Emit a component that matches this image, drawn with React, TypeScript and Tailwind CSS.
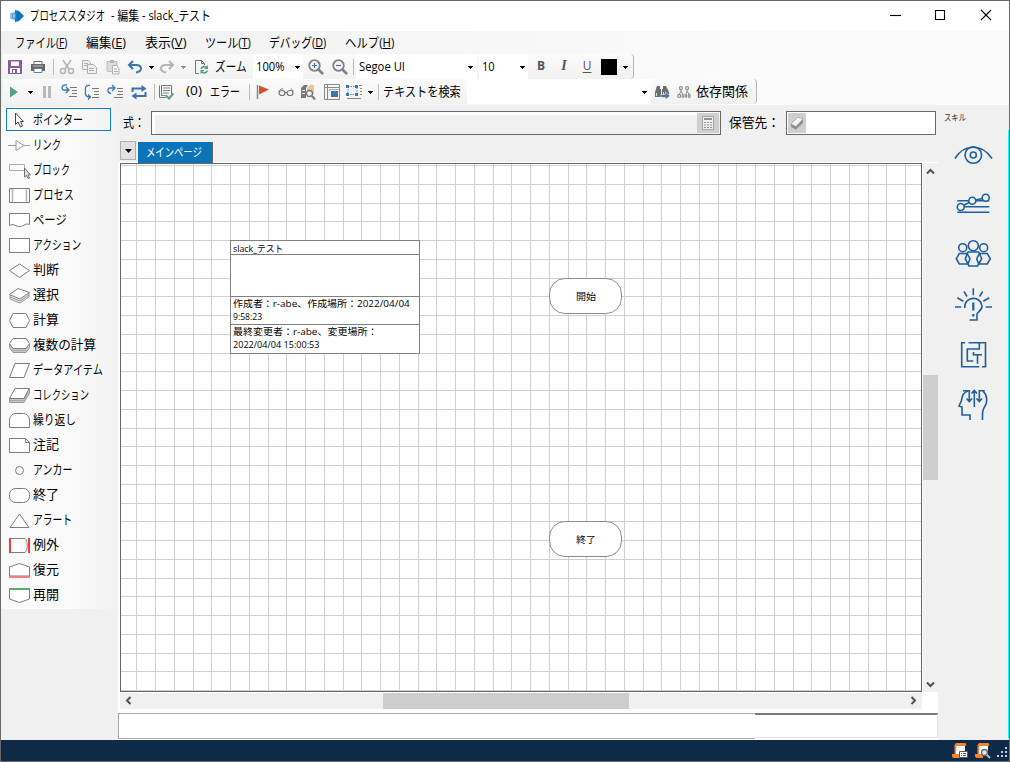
import React from 'react'
import clsx from 'clsx'

// Squeezes its text horizontally so that it takes exactly `w` pixels
function Fit({ w, className, children }: { w: number; className?: string; children: React.ReactNode }) {
  const ref = React.useRef<HTMLSpanElement>(null)
  const [scale, setScale] = React.useState(1)

  React.useLayoutEffect(() => {
    if (ref.current) setScale(w / ref.current.offsetWidth)
  }, [w])

  return (
    <span className={clsx('block shrink-0', className)} style={{ width: w }}>
      <span ref={ref} className="inline-block origin-left whitespace-nowrap" style={{ transform: `scaleX(${scale})` }}>
        {children}
      </span>
    </span>
  )
}

function Cell({ className, children }: { className: string; children?: React.ReactNode }) {
  return <div className={clsx('flex h-full shrink-0 items-center justify-center', className)}>{children}</div>
}

function Caret({ className = 'text-black' }: { className?: string }) {
  return (
    <svg width="5" height="3" viewBox="0 0 5 3" className={clsx('mt-px shrink-0', className)} shapeRendering="crispEdges">
      <path d="M0 0h5v1h-1v1h-1v1h-1v-1h-1v-1h-1z" fill="currentColor" />
    </svg>
  )
}

function Separator({ className }: { className: string }) {
  return (
    <Cell className={className}>
      <div className="h-4 w-px bg-[#bdbdbd]" />
    </Cell>
  )
}

function Icon({ children, size = 16 }: { children: React.ReactNode; size?: number }) {
  return (
    <svg width={size} height={size} viewBox="0 0 16 16" fill="none" className="shrink-0">
      {children}
    </svg>
  )
}

function TitleBar() {
  return (
    <div className="flex h-[30px] items-center bg-white pb-[2px]">
      <svg width="14" height="14" viewBox="0 0 14 14" className="mt-px ml-[9px]">
        <path d="M0 4l7-2v10l-7-2z" fill="#9ccbe8" />
        <path d="M5 1l4 1 5 5-5 5-4 1z" fill="#0b76bd" />
        <path d="M2.5 5h3v4h-3z" fill="none" stroke="#3d93cb" />
      </svg>
      <Fit w={75} className="ml-[6px]">プロセススタジオ</Fit>
      <Fit w={100} className="ml-[6px]">- 編集 - slack_テスト</Fit>
      <div className="ml-auto flex h-full items-center">
        <svg width="112" height="14" viewBox="0 0 112 14" className="mr-[12px]" fill="none" stroke="#000" strokeWidth="1.1">
          <path d="M5 7.5h11" />
          <path d="M50.5 2.5h9v9h-9z" />
          <path d="M96 2l10 10M106 2l-10 10" />
        </svg>
      </div>
    </div>
  )
}

const menus = [
  { label: 'ファイル', key: 'F', w: 52, cell: 'w-[71px]' },
  { label: '編集', key: 'E', w: 40, cell: 'w-[59px]' },
  { label: '表示', key: 'V', w: 41, cell: 'w-[60px]' },
  { label: 'ツール', key: 'T', w: 46, cell: 'w-[64px]' },
  { label: 'デバッグ', key: 'D', w: 57, cell: 'w-[76px]' },
  { label: 'ヘルプ', key: 'H', w: 49, cell: 'w-[68px]' },
]

function MenuBar() {
  return (
    <div className="flex h-[23px] items-center pb-px pl-[14px]">
      {menus.map((m) => (
        <div key={m.key} className={clsx('shrink-0', m.cell)}>
          <Fit w={m.w}>
            {m.label}(<span className="underline underline-offset-1">{m.key}</span>)
          </Fit>
        </div>
      ))}
    </div>
  )
}

function MainToolbar() {
  return (
    <div className="flex h-[25px] w-[631px] items-center rounded-r border-r border-[#b5b5b5] bg-linear-to-b from-[#fbfbfb] to-[#f1f1f1]">
      <Cell className="w-6">
        <Icon>
          <path d="M1 1h14v14H1z" fill="#8a5aa9" />
          <path d="M4 2.5h8V7H4zM3 9h10v5H3z" fill="#fff" />
          <path d="M5 10h5v4H5z" fill="#8a5aa9" />
          <path d="M6 11h2v3H6z" fill="#fff" />
        </Icon>
      </Cell>
      <Cell className="w-[22px]">
        <Icon>
          <path d="M4 2.5h8v4H4z" fill="#fff" stroke="#666" />
          <path d="M1 5h14v7H1z" fill="#666" />
          <path d="M3 7h10" stroke="#bbb" />
          <path d="M4 9.5h8v4H4z" fill="#fff" stroke="#5a7fa8" />
        </Icon>
      </Cell>
      <Separator className="w-2" />
      <Cell className="w-5">
        <Icon>
          <path d="M4 1l6 9M12 1L6 10" stroke="#b4b4b4" strokeWidth="1.6" />
          <circle cx="4" cy="12" r="2.5" stroke="#b4b4b4" strokeWidth="1.5" />
          <circle cx="12" cy="12" r="2.5" stroke="#b4b4b4" strokeWidth="1.5" />
        </Icon>
      </Cell>
      <Cell className="w-6">
        <Icon>
          <path d="M1.5 1.5h6l2 2v7h-8z" fill="#eee" stroke="#b0b0b0" />
          <path d="M3 4.5h4M3 6.5h4" stroke="#b0b0b0" />
          <path d="M6.5 5.5h6l3 3v6h-9z" fill="#eee" stroke="#b0b0b0" />
          <path d="M8 9.5h5M8 11.5h5" stroke="#b0b0b0" />
        </Icon>
      </Cell>
      <Cell className="w-6">
        <Icon>
          <path d="M2 2.5h10v10H2z" fill="#ddd" stroke="#c0c0c0" />
          <path d="M5 1h4v3H5z" fill="#b8b8b8" />
          <path d="M7.5 6.5h4L14 9v6H7.5z" fill="#f4f4f4" stroke="#b0b0b0" />
          <path d="M9 10h3M9 12.5h4" stroke="#b0b0b0" />
        </Icon>
      </Cell>
      <Cell className="w-5">
        <Icon>
          <path d="M6 2L2 6l4 4M2 6h7c3 0 5 1.5 5 3.500S12.500 13 9 13.500" stroke="#3f74ad" strokeWidth="2" />
        </Icon>
      </Cell>
      <Cell className="w-3"><Caret /></Cell>
      <Cell className="w-5">
        <Icon>
          <path d="M10 2l4 4-4 4M14 6H7C4 6 2 7.500 2 9.500S3.500 13 7 13.500" stroke="#b4b4b4" strokeWidth="2" />
        </Icon>
      </Cell>
      <Cell className="w-3"><Caret className="text-[#8e8e8e]" /></Cell>
      <Cell className="w-6">
        <Icon>
          <path d="M6 14.500H2.500v-13h6l3 3V6" stroke="#777" />
          <path d="M8.500 1.500v3h3" stroke="#777" />
          <path d="M8 10c1-3 5-3 6-1M14.500 11.500c-1 3-5 3-6 1" stroke="#5f9f86" strokeWidth="1.600" />
          <path d="M15 6v4h-4zM7.500 15v-4h4z" fill="#5f9f86" />
        </Icon>
      </Cell>
      <Cell className="w-10 justify-start! pb-px pl-[2px]"><Fit w={32}>ズーム</Fit></Cell>
      <Cell className="w-[50px] justify-between! bg-white pr-[3px] pl-[3px]">
        <Fit w={29} className="text-[12px]">100%</Fit>
        <Caret />
      </Cell>
      <Cell className="w-[26px]">
        <Icon>
          <circle cx="6.500" cy="6.500" r="5.300" stroke="#808080" strokeWidth="1.800" />
          <path d="M10.500 10.500l4.500 4.500" stroke="#808080" strokeWidth="2.600" />
          <path d="M4 6.500h5M6.500 4v5" stroke="#3f74ad" strokeWidth="1.200" />
        </Icon>
      </Cell>
      <Cell className="w-[22px]">
        <Icon>
          <circle cx="6.500" cy="6.500" r="5.300" stroke="#808080" strokeWidth="1.800" />
          <path d="M10.500 10.500l4.500 4.500" stroke="#808080" strokeWidth="2.600" />
          <path d="M4 6.500h5" stroke="#3f74ad" strokeWidth="1.200" />
        </Icon>
      </Cell>
      <Separator className="w-[5px]" />
      <Cell className="w-[121px] justify-between! bg-white pr-[4px] pl-[3px]">
        <Fit w={46} className="text-[12px]">Segoe UI</Fit>
        <Caret />
      </Cell>
      <Cell className="ml-[2px] w-[49px] justify-between! bg-white pr-[3px] pl-[3px]">
        <Fit w={13} className="text-[12px]">10</Fit>
        <Caret />
      </Cell>
      <Cell className="w-[26px] pb-[2px] text-[12px] font-bold text-[#555]">B</Cell>
      <Cell className="w-5 pb-[2px] font-['Liberation_Serif',serif] text-[14px] font-bold text-[#555] italic">I</Cell>
      <Cell className="w-[26px] pb-[2px] text-[12px] text-[#555]">
        <span className="underline underline-offset-2">U</span>
      </Cell>
      <Cell className="w-[18px]"><div className="h-4 w-4 bg-black" /></Cell>
      <Cell className="w-[14px]"><Caret /></Cell>
    </div>
  )
}

function DebugToolbar() {
  return (
    <div className="flex h-[25px] w-[754px] items-center rounded-r border-r border-[#b5b5b5] bg-linear-to-b from-[#fbfbfb] to-[#f1f1f1]">
      <Cell className="w-[22px]">
        <Icon><path d="M4 2.500l8 5.500-8 5.500z" fill="#55a07f" /></Icon>
      </Cell>
      <Cell className="w-[10px]"><Caret /></Cell>
      <Cell className="w-6">
        <Icon><path d="M4 2h3v12H4zM9 2h3v12H9z" fill="#b9b9b9" /></Icon>
      </Cell>
      <Cell className="w-5">
        <Icon>
          <path d="M6 1C0 0 0 6 3 6h4M5 3l3 3-3 3" stroke="#3f74ad" strokeWidth="1.300" />
          <path d="M9 3.500h7M11 6.500h5M11 9.500h5M8 12.500h8" stroke="#777" />
        </Icon>
      </Cell>
      <Cell className="w-[26px]">
        <Icon>
          <path d="M6 1.500C2 1 1 3 1.500 6c-.5 5 0 7 4.500 7M4 10.500L6.500 13 4 15.500" stroke="#3f74ad" strokeWidth="1.300" />
          <path d="M8 4.500h7M10 7.500h5M10 10.500h5M8 13.500h7" stroke="#777" />
        </Icon>
      </Cell>
      <Cell className="w-5">
        <Icon>
          <path d="M4 9.500C0 9 0 4 3 4h4M5 1l3 3-3 3" stroke="#3f74ad" strokeWidth="1.300" />
          <path d="M10 4.500h6M11 7.500h5M10 10.500h6M7 13.500h9" stroke="#777" />
        </Icon>
      </Cell>
      <Cell className="w-7">
        <Icon>
          <path d="M1.500 8V4.500H12M14.500 8v4H4" stroke="#3f74ad" strokeWidth="2" />
          <path d="M10.500 1l5 3.500-5 3.500zM5.500 8.500l-5 3.500 5 3.500z" fill="#3f74ad" />
        </Icon>
      </Cell>
      <Separator className="w-[3px]" />
      <Cell className="w-5">
        <Icon>
          <path d="M3.500 1.500h10v9M1.500 1.500v12H8M3.500 1.500v10" stroke="#777" />
          <path d="M5 4h7M5 6.500h7M5 9h6M3 11.500h5" stroke="#888" />
          <path d="M8 11.500l3 3 4.500-5" stroke="#5f9f86" strokeWidth="2" />
        </Icon>
      </Cell>
      <Cell className="w-[72px] justify-start! pb-px pl-[10px]">
        <Fit w={16} className="text-[12px]">(0)</Fit>
        <Fit w={30} className="ml-[8px]">エラー</Fit>
      </Cell>
      <Separator className="w-[3px]" />
      <Cell className="w-6">
        <Icon>
          <path d="M2.500 1v14" stroke="#888" strokeWidth="1.500" />
          <path d="M4 1.500l10 4-10 5z" fill="#d9512c" />
        </Icon>
      </Cell>
      <Cell className="w-[22px]">
        <Icon>
          <ellipse cx="4" cy="9" rx="3" ry="2.500" stroke="#777" strokeWidth="1.200" />
          <ellipse cx="12" cy="9" rx="3" ry="2.500" stroke="#777" strokeWidth="1.200" />
          <path d="M7 8.500h2M1 8c0-2 2-3.500 4-3M15 8c0-2-1-3-2.500-3" stroke="#777" />
        </Icon>
      </Cell>
      <Cell className="w-[22px]">
        <Icon>
          <path d="M1 4l3-3h4L6 4v10H1z" fill="#777" />
          <path d="M8 3l2-2h4v9H7V4z" fill="#efc48d" />
          <path d="M2 6.500h3M2 9.500h3" stroke="#eee" />
          <circle cx="9.500" cy="9.500" r="3" fill="#f4f1ea" stroke="#777" strokeWidth="1.300" />
          <path d="M12 12l3 3.500" stroke="#777" strokeWidth="2" />
        </Icon>
      </Cell>
      <Cell className="w-[26px]">
        <Icon>
          <path d="M.5.5h15v15H.5zM.5 3.500h15M3.500.5v15" stroke="#888" />
          <path d="M5.500 7v-1.500h9" stroke="#aaa" />
          <path d="M7 7h7v6H7z" fill="#3f74ad" />
        </Icon>
      </Cell>
      <Cell className="w-[18px]">
        <Icon>
          <path d="M2 2.500h9v8H2z" stroke="#5c87b5" strokeDasharray="1.500 1" />
          <path d="M0 1h3v3H0zM9 1h3v3H9zM0 9h3v3H0zM9 9h3v3H9z" fill="#3f74ad" />
          <path d="M13 1.500h3M14 4.500h2M14 7.500h2M14 10.500h2M1 14.500h14" stroke="#888" />
        </Icon>
      </Cell>
      <Cell className="w-[14px]"><Caret /></Cell>
      <Separator className="w-[3px]" />
      <Cell className="w-[87px] justify-start! pb-px pl-[3px]"><Fit w={78}>テキストを検索</Fit></Cell>
      <Cell className="w-[184px] justify-end! bg-white pr-[4px]"><Caret /></Cell>
      <Cell className="w-[22px]">
        <Icon>
          <path d="M3 2h3v3h1v8H1V8zM9 2h3l3 6v5H8V5h1z" fill="#6c6c6c" />
          <path d="M2.500 9v3M9.500 8v4" stroke="#ddd" />
          <path d="M7 10.500h4.500V8l4.500 4-4.500 3.500v-2H7z" fill="#3f74ad" stroke="#f4f4f4" strokeWidth=".6" />
        </Icon>
      </Cell>
      <Cell className="w-[22px]">
        <Icon size={14}>
          <path d="M3 2h3v3H3zM10 2h3v3h-3zM1 11h3v3H1zM6 11h2v3H6zM10 11h1v3h-1zM13 11h2v3h-2zM4.500 5v2L2.500 11M4.500 7L7 11M11.500 5v2L10 11M11.500 7l2.500 4" stroke="#808080" strokeWidth="1.100" />
        </Icon>
      </Cell>
      <Cell className="w-[60px] justify-start! pb-px pl-[1px]"><Fit w={52}>依存関係</Fit></Cell>
    </div>
  )
}

// Stencil icons are drawn on a 22x18 box
const stages: { label: string; w: number; icon: React.ReactNode }[] = [
  {
    label: 'ポインター',
    w: 50,
    icon: <path d="M7.500 2v11.500l2.500-2.500 2.500 5 2-1-2-4.500h3z" fill="#fff" stroke="#444" />,
  },
  { label: 'リンク', w: 28, icon: <path d="M0 9.500h8M16 9.500h6M8 4.500v10l8-5z" fill="none" stroke="#999" /> },
  {
    label: 'ブロック',
    w: 37,
    icon: (
      <>
        <path d="M1.500 3.500h15v6h-15z" fill="none" stroke="#aaa" />
        <path d="M16.500 7v9l2-1.500 1.500 3 1.500-.5-1.500-3h2.500z" fill="#ddd" stroke="#555" strokeWidth=".8" />
      </>
    ),
  },
  {
    label: 'プロセス',
    w: 41,
    icon: (
      <>
        <path d="M1.500 2.500h20v14h-20z" />
        <path d="M4.500 3v13M18.500 3v13" stroke="#b5b5b5" strokeWidth="1.500" />
      </>
    ),
  },
  { label: 'ページ', w: 34, icon: <path d="M1.500 2.500h20v11c-5-2-6 3-11 2-4-1-5-3-9-1z" /> },
  { label: 'アクション', w: 48, icon: <path d="M1.500 2.500h20v14h-20z" /> },
  { label: '判断', w: 26, icon: <path d="M1.500 9.500L11.500 3l10 6.500-10 7z" /> },
  {
    label: '選択',
    w: 26,
    icon: (
      <>
        <path d="M2 9v4l10 4 9-6V7z" fill="#e8e8e8" stroke="#999" />
        <path d="M2 11l10 4 9-6" fill="none" stroke="#999" />
        <path d="M1.500 8.500l8.500-6 11.500 4L12 13z" />
      </>
    ),
  },
  { label: '計算', w: 26, icon: <path d="M5 2.500h13l3.500 7-3.500 7H5l-3.500-7z" /> },
  {
    label: '複数の計算',
    w: 63,
    icon: (
      <>
        <path d="M1.500 8v3.500l3.500 5h13l3.500-5V8" fill="#c8c8c8" stroke="#999" />
        <path d="M4.500 14.500h14" stroke="#aaa" />
        <path d="M5 2.500h13l3.500 5-3.500 5H5l-3.500-5z" />
      </>
    ),
  },
  { label: 'データアイテム', w: 70, icon: <path d="M7 2.500h14.500l-5.500 14H1.500z" /> },
  {
    label: 'コレクション',
    w: 56,
    icon: (
      <>
        <path d="M1.500 12.500v4H16l5.500-9v-5" fill="#c8c8c8" stroke="#999" />
        <path d="M2 14.500h13.500l5.500-9" fill="none" stroke="#aaa" />
        <path d="M7 2.500h14l-5 10H1.500z" />
      </>
    ),
  },
  { label: '繰り返し', w: 43, icon: <path d="M1.500 16.500V8c1-3 3-5.500 6-5.500h8c3 0 5 2.500 6 5.500v8.500z" /> },
  { label: '注記', w: 26, icon: <path d="M1.500 2.500h16l4 4v10h-20zM17.500 2.500v4h4" /> },
  { label: 'アンカー', w: 39, icon: <circle cx="11.500" cy="9.500" r="4" /> },
  { label: '終了', w: 26, icon: <rect x="1.500" y="2.500" width="20" height="14" rx="6" /> },
  { label: 'アラート', w: 39, icon: <path d="M11.500 3L21 16.500H2z" /> },
  {
    label: '例外',
    w: 26,
    icon: (
      <>
        <path d="M2 2.500h15c3 3 3 11 0 14H2z" />
        <path d="M2 2v15M21 2v15" stroke="#f03c3c" strokeWidth="2" />
      </>
    ),
  },
  {
    label: '復元',
    w: 26,
    icon: (
      <>
        <path d="M1.500 15V6l10-3.500 10 3.500v9z" />
        <path d="M1 16h21" stroke="#f08080" strokeWidth="2" />
      </>
    ),
  },
  {
    label: '再開',
    w: 26,
    icon: (
      <>
        <path d="M1.500 3v10l10 3.500 10-3.500V3z" />
        <path d="M1 3h21" stroke="#62a868" strokeWidth="2" />
      </>
    ),
  },
]

function Toolbox() {
  return (
    <div className="w-[117px] shrink-0 bg-[#f0f0f0] pt-[2px]">
      <div className="h-[502px] rounded-b bg-linear-to-r from-[#fafafa] from-60% to-[#f1f1f1] pl-[5px]">
        {stages.map((s, i) => (
          <div key={s.label} className="flex h-[25px] items-center">
            <div
              className={clsx(
                'flex h-[23px] w-[105px] items-center border',
                i === 0 ? 'border-[#0f7bd4]' : 'border-transparent',
              )}
            >
              <svg width="24" height="19" viewBox="0 -1 24 19" className="ml-px shrink-0" fill="#fff" stroke="#7d7d7d">
                {s.icon}
              </svg>
              <Fit w={s.w} className="mb-[2px] ml-px">{s.label}</Fit>
            </div>
          </div>
        ))}
      </div>
    </div>
  )
}

function ExpressionBar() {
  return (
    <div className="flex h-9 shrink-0 items-start bg-[#f0f0f0] pt-[6px]">
      <Fit w={22} className="ml-[5px] pt-[2px]">式：</Fit>
      <div className="ml-[6px] flex h-6 w-[570px] items-center justify-end border border-[#696969] bg-[#f0f0f0] shadow-[inset_3px_3px_0_#fff]">
        <div className="mr-px flex h-5 w-[22px] items-center justify-center bg-[#cfcfcf]">
          <Icon>
            <path d="M2.500 1.500h11v13h-11z" fill="#eee" stroke="#a5a5a5" />
            <path d="M4 3h8v2H4zM4 7h2v1H4zM7 7h2v1H7zM10 7h2v1h-2zM4 9.500h2v1H4zM7 9.500h2v1H7zM10 9.500h2v1h-2zM4 12h2v1H4zM7 12h2v1H7zM10 12h2v1h-2z" fill="#909090" />
          </Icon>
        </div>
      </div>
      <Fit w={51} className="ml-[8px] pt-[2px]">保管先：</Fit>
      <div className="ml-[6px] flex h-6 w-[150px] items-center border border-[#696969] bg-white">
        <div className="ml-px flex h-5 w-[18px] items-center justify-center bg-[#cfcfcf]">
          <Icon>
            <path d="M2 9l7-7 5 2v4l-7 6.500-5-2.500z" fill="#8e8e8e" />
            <path d="M2 9l7-7 5 2-7 7.500z" fill="#f3f3f3" stroke="#999" strokeWidth=".6" />
          </Icon>
        </div>
      </div>
    </div>
  )
}

const columns = Array.from({ length: 42 }, (_, i) => Math.round(15.25 + i * 18.75) + 0.5)
const rows = Array.from({ length: 29 }, (_, i) => Math.round(1 + i * 18.75) + 0.5)

function Canvas() {
  return (
    <div className="relative h-[529px] w-[802px] shrink-0 overflow-hidden border border-[#666] bg-white text-[9.5px] leading-[13px]">
      <svg width="800" height="527" stroke="#d0d0d0" className="block">
        {columns.map((x) => (
          <path key={x} d={`M${x} 0v527`} />
        ))}
        {rows.map((y) => (
          <path key={y} d={`M0 ${y}h800`} />
        ))}
      </svg>

      {/* Page information */}
      <div className="absolute top-[76px] left-[109px] w-[190px] border border-[#808080] bg-white">
        <div className="h-[14px] border-b border-[#808080] pt-px pl-[2px]"><Fit w={50}>slack_テスト</Fit></div>
        <div className="h-[42px] border-b border-[#808080]" />
        <div className="h-[28px] border-b border-[#808080] pl-[2px]">
          <Fit w={177}>作成者：r-abe、作成場所：2022/04/04</Fit>
          <Fit w={29}>9:58:23</Fit>
        </div>
        <div className="h-[28px] pl-[2px]">
          <Fit w={144}>最終変更者：r-abe、変更場所：</Fit>
          <Fit w={86}>2022/04/04 15:00:53</Fit>
        </div>
      </div>

      <div className="absolute top-[114px] left-[428px] flex h-9 w-[73px] items-center justify-center rounded-[16px] border border-[#8c8c8c] bg-white">
        <Fit w={20}>開始</Fit>
      </div>
      <div className="absolute top-[357px] left-[428px] flex h-9 w-[73px] items-center justify-center rounded-[16px] border border-[#8c8c8c] bg-white">
        <Fit w={20}>終了</Fit>
      </div>
    </div>
  )
}

function Chevron({ d }: { d: string }) {
  return (
    <svg width="9" height="9" viewBox="0 0 9 9" fill="none" stroke="#505050" strokeWidth="2" className="shrink-0">
      <path d={d} />
    </svg>
  )
}

function Workspace() {
  return (
    <div className="flex w-[820px] shrink-0 flex-col bg-white">
      <ExpressionBar />
      <div className="flex h-[22px] shrink-0 items-start border-b border-white bg-[#f0f0f0] pl-[2px]">
        <div className="flex h-[19px] w-4 items-center justify-center border border-[#adadad] bg-[#e1e1e1]">
          <svg width="7" height="4" viewBox="0 0 7 4"><path d="M0 0h7L3.500 4z" /></svg>
        </div>
        <div className="mt-px ml-[2px] flex h-[21px] w-[75px] items-center border-r border-[#666] bg-[#0b74b9] pt-px pl-[8px] text-[12px] text-white">
          <Fit w={56}>メインページ</Fit>
        </div>
      </div>
      <div className="flex h-[529px] shrink-0 pl-[2px]">
        <Canvas />
        <div className="ml-px flex w-[15px] flex-col items-center bg-[#f0f0f0]">
          <div className="mt-[4px] h-[208px]"><Chevron d="M1 6.500L4.500 3 8 6.500" /></div>
          <div className="h-[105px] w-full bg-[#cdcdcd]" />
          <div className="mt-auto mb-[3px]"><Chevron d="M1 2.500L4.500 6 8 2.500" /></div>
        </div>
      </div>
      <div className="mt-px ml-[2px] flex h-4 w-[802px] shrink-0 items-center bg-[#f0f0f0]">
        <div className="w-[263px] pb-px pl-[4px]"><Chevron d="M6.500 1L3 4.500 6.500 8" /></div>
        <div className="h-full w-[246px] bg-[#cdcdcd]" />
        <div className="mr-[4px] ml-auto pb-px"><Chevron d="M2.500 1L6 4.500 2.500 8" /></div>
      </div>
      <div className="mt-[4px] flex h-[26px] shrink-0">
        <div className="w-[637px] border border-r-0 border-[#a9a9b1] bg-white" />
        <div className="mb-px w-[183px] border-t-2 border-r border-b border-t-[#7b7b7f] border-r-[#e3e3e3] border-b-[#e3e3e3] bg-white" />
      </div>
    </div>
  )
}

const skills: { name: string; art: React.ReactNode }[] = [
  {
    name: 'vision',
    art: (
      <>
        <path d="M2 23.500c9-15 27-15 37 0" />
        <circle cx="20.300" cy="20" r="8.300" />
        <circle cx="20.300" cy="20" r="3" />
      </>
    ),
  },
  {
    name: 'planning',
    art: (
      <>
        <path d="M4.300 15.700h32M12 21.700h24.300M4.300 27.300h32M7.700 22l11.600-6.300 13.400-3" />
        <g fill="#f0f0f0">
          <circle cx="7.700" cy="22" r="3.500" />
          <circle cx="19.300" cy="15.700" r="3.500" />
          <circle cx="32.700" cy="12.700" r="3.500" />
        </g>
      </>
    ),
  },
  {
    name: 'collaboration',
    art: (
      <>
        <circle cx="20.300" cy="10.700" r="5" />
        <circle cx="9.700" cy="12.700" r="4" />
        <circle cx="30.700" cy="12.700" r="4" />
        <path d="M15 17h10.700l3 6.700-4 7.300H16l-3.700-7.300z" />
        <path d="M14 18.500H6.300l-3 5.200 3 5.300H15l2-5.300zM26.500 18.500h7.800l3 5.200-3 5.300h-8.600l-2-5.300z" />
      </>
    ),
  },
  {
    name: 'problem solving',
    art: (
      <>
        <path d="M20.300 3.300v7M11 6.500l3 5M4.300 12.700l6 3.600M2 22h6.300M29.600 6.500l-3 5M36.300 12.700l-6 3.600M39 22h-6.300" />
        <path d="M11.700 23c-.7-12 16-13 17.300-2 .2 4-4 6-5 8v6h-7.500" />
        <path d="M20.300 17.500v8M20.300 29v2.500" strokeWidth="2.200" />
      </>
    ),
  },
  {
    name: 'knowledge',
    art: (
      <>
        <path d="M12 7.700H8.700v24h17.600M15.500 7.700h17v24h-3.500" />
        <path d="M26.300 8v6h-12v12h6M29 19.700h-8.500V17M24.500 19.700v9" />
      </>
    ),
  },
  {
    name: 'learning',
    art: (
      <>
        <path d="M15 6c-4 1-6 5-6.500 9.500L6 21l3 1v8h8v5" />
        <path d="M30 6c5 5 4.500 12 1.500 16-2 3-2 5-2 13" />
        <path d="M10 5.700h6.300v10.500M21.300 22V6M26.300 16.200V5.700h5.500M13.500 13.500l2.800 3 2.800-3M18.500 8.500l2.800-3 2.800 3M23.500 13.500l2.800 3 2.800-3" />
      </>
    ),
  },
]

function SkillsPanel() {
  return (
    <div className="flex w-[71px] shrink-0 flex-col bg-[#f0f0f0] pb-[2px]">
      <div className="flex h-[25px] pt-[5px] pl-[6px] text-[9px] leading-[16px] text-[#333]">
        <Fit w={22}>スキル</Fit>
      </div>
      <div className="flex grow">
        <div className="flex w-[70px] flex-col items-center">
          {skills.map((s) => (
            <div key={s.name} className="flex h-[50px] items-center">
              <svg width="40" height="40" viewBox="0 0 40 40" fill="none" stroke="#1f5f9c" strokeWidth="1.600">
                {s.art}
              </svg>
            </div>
          ))}
        </div>
        <div className="w-px bg-[#00ffff]" />
      </div>
    </div>
  )
}

function StatusBar() {
  return (
    <div className="flex h-[21px] items-center justify-end bg-[#0e2a47]">
      <Icon>
        <path d="M3 2h10v11H3z" fill="#fff" />
        <path d="M4 0h9c1.500 0 2 3 0 3H4.500L4 11H2.500V2zM0 11h8v4H1.500C0 15 0 12 0 11z" fill="#ee8435" />
        <path d="M7.500 8.500h8v6h-8z" fill="#fff" stroke="#555" />
        <path d="M9 10.500h1M11 10.500h3M9 12.500h1M11 12.500h3" stroke="#555" />
      </Icon>
      <div className="ml-[7px] flex">
        <Icon>
          <path d="M3 2h10v11H3z" fill="#fff" />
          <path d="M4 0h9c1.500 0 2 3 0 3H4.500L4 11H2.500V2zM0 11h8v4H1.500C0 15 0 12 0 11z" fill="#ee8435" />
          <circle cx="9.500" cy="9.500" r="3" fill="#dfe8ee" stroke="#666" strokeWidth="1.300" />
          <path d="M12 12l3 3" stroke="#bbb" strokeWidth="2" />
        </Icon>
      </div>
      <svg width="12" height="12" viewBox="0 0 12 12" className="mt-[5px] mr-px ml-[5px]" fill="#c9ced2">
        <path d="M9 0h2v2H9zM5 4h2v2H5zM9 4h2v2H9zM1 8h2v2H1zM5 8h2v2H5zM9 8h2v2H9z" />
      </svg>
    </div>
  )
}

export default function App() {
  return (
    <div className="flex h-[762px] w-[1010px] flex-col overflow-hidden border border-[#696969] bg-[#f0f0f0] font-['Open_Sans','Noto_Sans_CJK_JP',sans-serif] text-[13px] leading-[18px] text-black">
      <TitleBar />
      <div className="h-[74px] shrink-0 bg-linear-to-r from-[#f0f0f0] to-[#fbfbfb] to-80%">
        <MenuBar />
        <div className="flex flex-col pl-[2px]">
          <MainToolbar />
          <DebugToolbar />
        </div>
      </div>
      <div className="flex h-[635px] w-[1008px] shrink-0">
        <Toolbox />
        <Workspace />
        <SkillsPanel />
      </div>
      <StatusBar />
    </div>
  )
}
